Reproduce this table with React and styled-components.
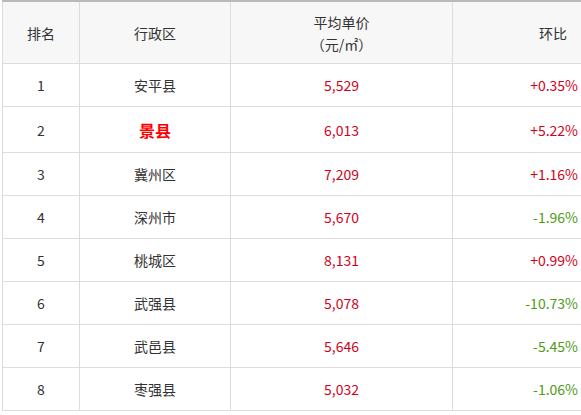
import React from 'react';
import styled, { createGlobalStyle } from 'styled-components';

const rows = [
  { rank: 1, name: '安平县', price: '5,529', change: '+0.35%' },
  { rank: 2, name: '景县', price: '6,013', change: '+5.22%', hot: true },
  { rank: 3, name: '冀州区', price: '7,209', change: '+1.16%' },
  { rank: 4, name: '深州市', price: '5,670', change: '-1.96%' },
  { rank: 5, name: '桃城区', price: '8,131', change: '+0.99%' },
  { rank: 6, name: '武强县', price: '5,078', change: '-10.73%' },
  { rank: 7, name: '武邑县', price: '5,646', change: '-5.45%' },
  { rank: 8, name: '枣强县', price: '5,032', change: '-1.06%' },
];

const App = () => (
  <Page>
    <GlobalStyle />
    <Table>
      <colgroup>
        <col style={{ width: 77 }} />
        <col style={{ width: 151 }} />
        <col style={{ width: 222 }} />
        <col style={{ width: 134 }} />
      </colgroup>
      <thead>
        <tr>
          <Th>排名</Th>
          <Th>行政区</Th>
          <Th>
            平均单价
            <br />（元/㎡）
          </Th>
          <Th $right>环比</Th>
        </tr>
      </thead>
      <tbody>
        {rows.map((r) => (
          <Row key={r.rank} $hot={r.hot}>
            <Td>{r.rank}</Td>
            <Td>{r.hot ? <Hot>{r.name}</Hot> : r.name}</Td>
            <Td $color="#d0021b">{r.price}</Td>
            <Td $right $color={r.change.startsWith('-') ? '#4f9a16' : '#d0021b'}>
              {r.change}
            </Td>
          </Row>
        ))}
      </tbody>
    </Table>
  </Page>
);

export default App;

const GlobalStyle = createGlobalStyle`
  body {
    margin: 0;
    background: #fff;
    font-family: 'Microsoft YaHei', 'Noto Sans CJK SC', 'Noto Sans', sans-serif;
    overflow: hidden;
  }
`;

const Page = styled.div`
  padding-left: 2px;
  width: 600px;
`;

const Table = styled.table`
  border-collapse: collapse;
  table-layout: fixed;
  width: 584px;
  border-top: 2px solid #b9b9b9;
  font-size: 14px;
  color: #333;
`;

const Th = styled.th`
  height: 61px;
  padding: 0 ${(p) => (p.$right ? '19px' : '8px')} 0 8px;
  background: #f7f7f7;
  border: 1px solid #dcdcdc;
  border-top: none;
  font-weight: normal;
  line-height: 22px;
  text-align: ${(p) => (p.$right ? 'right' : 'center')};
`;

const Row = styled.tr`
  height: ${(p) => (p.$hot ? '46px' : '43px')};
`;

const Td = styled.td`
  padding: 0 8px;
  border: 1px solid #dcdcdc;
  text-align: ${(p) => (p.$right ? 'right' : 'center')};
  color: ${(p) => p.$color || '#333'};
`;

const Hot = styled.span`
  color: #ff0000;
  font-weight: bold;
  font-size: 16px;
`;
